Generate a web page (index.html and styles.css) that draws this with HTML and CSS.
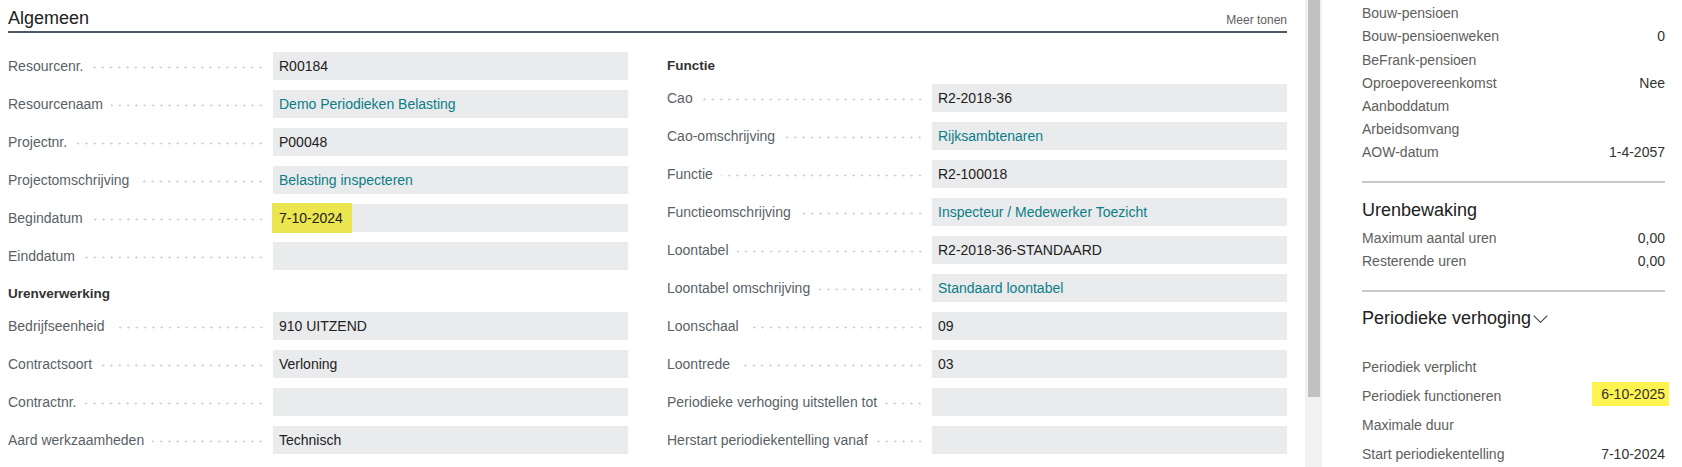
FILE: index.html
```html
<!DOCTYPE html>
<html lang="nl">
<head>
<meta charset="utf-8">
<title>Algemeen</title>
<link rel="stylesheet" href="styles.css">
</head>
<body>
<div class="page">
  <main class="left">
    <header class="section-head">
      <h2 class="section-title">Algemeen</h2>
      <span class="more">Meer tonen</span>
    </header>
    <div class="cols">
      <div class="col">
        <div class="row"><span class="label"><span class="lt">Resourcenr.</span><span class="dots"></span></span><span class="box">R00184</span></div>
        <div class="row"><span class="label"><span class="lt">Resourcenaam</span><span class="dots"></span></span><span class="box link">Demo Periodieken Belasting</span></div>
        <div class="row"><span class="label"><span class="lt">Projectnr.</span><span class="dots"></span></span><span class="box">P00048</span></div>
        <div class="row"><span class="label"><span class="lt">Projectomschrijving</span><span class="dots"></span></span><span class="box link">Belasting inspecteren</span></div>
        <div class="row"><span class="label"><span class="lt">Begindatum</span><span class="dots"></span></span><span class="box hl-box"><span class="hl">7-10-2024</span></span></div>
        <div class="row"><span class="label"><span class="lt">Einddatum</span><span class="dots"></span></span><span class="box"></span></div>
        <div class="group-head">Urenverwerking</div>
        <div class="row"><span class="label"><span class="lt">Bedrijfseenheid</span><span class="dots"></span></span><span class="box">910 UITZEND</span></div>
        <div class="row"><span class="label"><span class="lt">Contractsoort</span><span class="dots"></span></span><span class="box">Verloning</span></div>
        <div class="row"><span class="label"><span class="lt">Contractnr.</span><span class="dots"></span></span><span class="box"></span></div>
        <div class="row"><span class="label"><span class="lt">Aard werkzaamheden</span><span class="dots"></span></span><span class="box">Technisch</span></div>
      </div>
      <div class="col">
        <div class="group-head">Functie</div>
        <div class="row"><span class="label"><span class="lt">Cao</span><span class="dots"></span></span><span class="box">R2-2018-36</span></div>
        <div class="row"><span class="label"><span class="lt">Cao-omschrijving</span><span class="dots"></span></span><span class="box link">Rijksambtenaren</span></div>
        <div class="row"><span class="label"><span class="lt">Functie</span><span class="dots"></span></span><span class="box">R2-100018</span></div>
        <div class="row"><span class="label"><span class="lt">Functieomschrijving</span><span class="dots"></span></span><span class="box link">Inspecteur / Medewerker Toezicht</span></div>
        <div class="row"><span class="label"><span class="lt">Loontabel</span><span class="dots"></span></span><span class="box">R2-2018-36-STANDAARD</span></div>
        <div class="row"><span class="label"><span class="lt">Loontabel omschrijving</span><span class="dots"></span></span><span class="box link">Standaard loontabel</span></div>
        <div class="row"><span class="label"><span class="lt">Loonschaal</span><span class="dots"></span></span><span class="box">09</span></div>
        <div class="row"><span class="label"><span class="lt">Loontrede</span><span class="dots"></span></span><span class="box">03</span></div>
        <div class="row"><span class="label"><span class="lt">Periodieke verhoging uitstellen tot</span><span class="dots"></span></span><span class="box"></span></div>
        <div class="row"><span class="label"><span class="lt">Herstart periodiekentelling vanaf</span><span class="dots"></span></span><span class="box"></span></div>
      </div>
    </div>
  </main>

  <div class="scrollbar"><div class="thumb"></div></div>

  <aside class="right">
    <div class="facts">
      <div class="fact"><span>Bouw-pensioen</span><span class="fv"></span></div>
      <div class="fact"><span>Bouw-pensioenweken</span><span class="fv">0</span></div>
      <div class="fact"><span>BeFrank-pensioen</span><span class="fv"></span></div>
      <div class="fact"><span>Oproepovereenkomst</span><span class="fv">Nee</span></div>
      <div class="fact"><span>Aanboddatum</span><span class="fv"></span></div>
      <div class="fact"><span>Arbeidsomvang</span><span class="fv"></span></div>
      <div class="fact"><span>AOW-datum</span><span class="fv">1-4-2057</span></div>
    </div>
    <hr class="sep">
    <h3 class="fb-title">Urenbewaking</h3>
    <div class="facts">
      <div class="fact"><span>Maximum aantal uren</span><span class="fv">0,00</span></div>
      <div class="fact"><span>Resterende uren</span><span class="fv">0,00</span></div>
    </div>
    <hr class="sep">
    <h3 class="fb-title">Periodieke verhoging<svg class="chev" width="15" height="8" viewBox="0 0 15 8"><polyline points="0.7,0.7 7.5,7.3 14.3,0.7" fill="none" stroke="#3b3b3b" stroke-width="1.1"/></svg></h3>
    <div class="facts tall">
      <div class="fact"><span>Periodiek verplicht</span><span class="fv"></span></div>
      <div class="fact"><span>Periodiek functioneren</span><span class="fv"><span class="hl2">6-10-2025</span></span></div>
      <div class="fact"><span>Maximale duur</span><span class="fv"></span></div>
      <div class="fact"><span>Start periodiekentelling</span><span class="fv">7-10-2024</span></div>
    </div>
  </aside>
</div>
</body>
</html>
```

FILE: styles.css
```css
html, body {
  margin: 0;
  padding: 0;
  background: #ffffff;
}

body {
  font-family: "Liberation Sans", Arial, sans-serif;
  font-size: 14px;
  color: #212121;
}

.page {
  display: flex;
  width: 1682px;
  height: 467px;
  overflow: hidden;
}

/* ---------- left pane ---------- */
.left {
  width: 1305px;
  flex: none;
  box-sizing: border-box;
  padding: 0 18px 0 8px;
}

.section-head {
  display: flex;
  align-items: baseline;
  justify-content: space-between;
  padding-top: 6px;
  padding-bottom: 1px;
  border-bottom: 2px solid #4d5866;
}

.section-title {
  margin: 0;
  font-size: 18px;
  font-weight: normal;
  line-height: 24px;
  color: #212121;
}

.more {
  font-size: 12px;
  line-height: 12px;
  color: #605e5c;
}

.cols {
  display: grid;
  grid-template-columns: 620px 620px;
  column-gap: 39px;
  margin-top: 18.5px;
}

.col {
  display: flex;
  flex-direction: column;
  gap: 10px;
}

.group-head {
  height: 22px;
  line-height: 27px;
  font-weight: bold;
  font-size: 13.5px;
  color: #333333;
}

.row {
  display: grid;
  grid-template-columns: 265px 355px;
  height: 28px;
}

.label {
  display: flex;
  align-items: center;
  color: #5a5f66;
  white-space: nowrap;
  overflow: hidden;
}

.dots {
  flex: 1;
  height: 3px;
  margin: 3px 8px 0 8px;
  background-image: radial-gradient(circle, #d0d0d0 0.9px, transparent 1.2px);
  background-size: 8.3px 3px;
  background-repeat: repeat-x;
  background-position: right center;
}

.box {
  display: flex;
  align-items: center;
  background: #eaebed;
  padding-left: 6px;
  color: #212121;
  white-space: nowrap;
}

.box.link {
  color: #0b7d87;
}

.box.hl-box {
  padding-left: 0;
}

.hl {
  align-self: stretch;
  display: flex;
  align-items: center;
  margin: -1px 0 -1px -1px;
  padding: 0 9px 0 7px;
  background: #ebe54f;
}

/* ---------- fake scrollbar ---------- */
.scrollbar {
  width: 17px;
  flex: none;
  background: #f1f1f1;
  box-sizing: border-box;
  padding: 0 2px 0 3px;
}

.thumb {
  height: 397px;
  background: #c1c1c1;
}

/* ---------- right pane ---------- */
.right {
  flex: 1;
  box-sizing: border-box;
  padding: 1.7px 17px 0 40px;
}

.facts {
  display: flex;
  flex-direction: column;
}

.fact {
  display: flex;
  justify-content: space-between;
  align-items: center;
  height: 23.2px;
  color: #605e5c;
  white-space: nowrap;
}

.fv {
  color: #323130;
}

.facts.tall {
  margin-top: 21px;
}

.facts.tall .fact {
  height: 29px;
}

.sep {
  margin: 17px 0 0 0;
  border: none;
  height: 2px;
  background: #c8c8c8;
}

.fb-title {
  display: flex;
  align-items: center;
  margin: 13.5px 0 4px 0;
  font-size: 18px;
  font-weight: normal;
  line-height: 26px;
  color: #212121;
}

.chev {
  margin-left: 2px;
  margin-top: 1px;
}

.hl2 {
  display: inline-block;
  line-height: 24px;
  padding: 0 4px 0 9px;
  margin-right: -4px;
  margin-top: -3px;
  background: #fff44f;
}
```
